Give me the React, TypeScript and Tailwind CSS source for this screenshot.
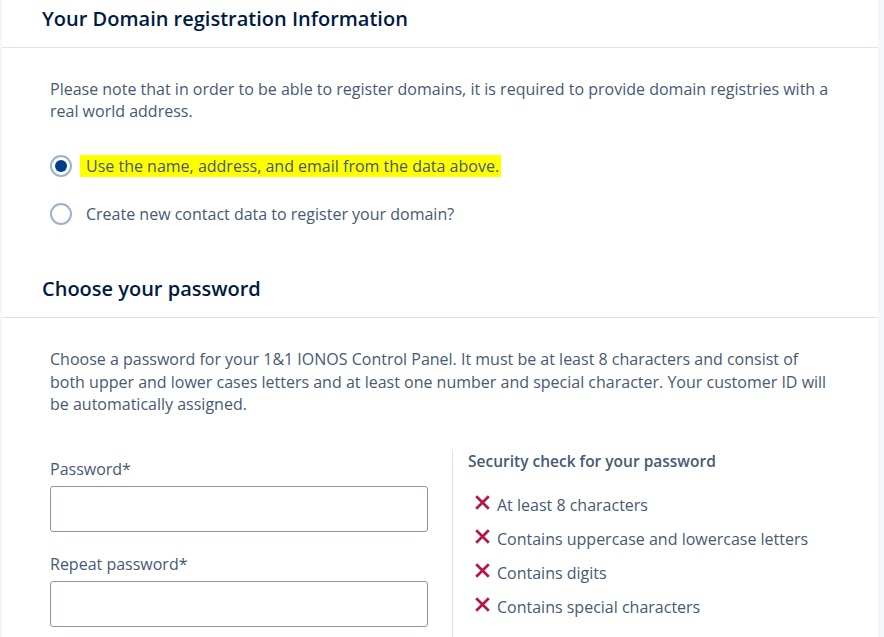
import React from "react";

function XIcon() {
  return (
    <svg width="15" height="15" viewBox="0 0 15 15" className="shrink-0 mt-[1px]">
      <path d="M1.2 1.2 L13.8 13.8 M13.8 1.2 L1.2 13.8" stroke="#b5164a" strokeWidth="2.7" strokeLinecap="butt" fill="none" />
    </svg>
  );
}

function Radio({ checked }: { checked: boolean }) {
  return (
    <span className="flex h-[22px] w-[22px] shrink-0 items-center justify-center rounded-full border-2 border-[#9ab3cf] bg-white">
      {checked && <span className="h-[12px] w-[12px] rounded-full bg-[#003d8f]" />}
    </span>
  );
}

export default function App() {
  const checks = [
    "At least 8 characters",
    "Contains uppercase and lowercase letters",
    "Contains digits",
    "Contains special characters",
  ];
  return (
    <div
      className="flex h-[637px] w-[884px] overflow-hidden bg-[#f4f6f8] text-[#465a75]"
      style={{ fontFamily: '"Open Sans", "Noto Sans", sans-serif' }}
    >
      <div className="ml-[2px] w-[876px] bg-white">
        {/* Section 1 */}
        <div className="border-b border-[#dbe2ea] pl-[40px] pt-[5px] pb-[14px]">
          <h2 className="text-[20px] font-semibold leading-[28px] text-[#001b41]">
            Your Domain registration Information
          </h2>
        </div>
        <div className="px-[48px]">
          <p className="mt-[30px] text-[16px] leading-[22px]">
            Please note that in order to be able to register domains, it is required to provide domain registries with a real world address.
          </p>
          <div className="mt-[33px] flex items-center">
            <Radio checked />
            <span className="ml-[8px] bg-[#ffff00] pl-[6px] pr-[2px] text-[16px] leading-[22px]">
              Use the name, address, and email from the data above.
            </span>
          </div>
          <div className="mt-[26px] flex items-center">
            <Radio checked={false} />
            <span className="ml-[14px] text-[16px] leading-[22px]">
              Create new contact data to register your domain?
            </span>
          </div>
        </div>

        {/* Section 2 */}
        <div className="mt-[50px] border-b border-[#dbe2ea] pl-[40px] pb-[14px]">
          <h2 className="text-[20px] font-semibold leading-[28px] text-[#001b41]">
            Choose your password
          </h2>
        </div>
        <div className="px-[48px]">
          <p className="mt-[30px] text-[16px] leading-[22.5px]">
            Choose a password for your 1&amp;1 IONOS Control Panel. It must be at least 8 characters and consist of both upper and lower cases letters and at least one number and special character. Your customer ID will be automatically assigned.
          </p>
          <div className="mt-[34px] flex">
            <div className="w-[402px] shrink-0 pt-[7px]">
              <label className="block text-[16px] leading-[24px]">Password*</label>
              <div className="mt-[5px] h-[46px] w-[378px] rounded-[3px] border border-[#8797ab] bg-white" />
              <label className="mt-[20px] block text-[16px] leading-[24px]">Repeat password*</label>
              <div className="mt-[5px] h-[46px] w-[378px] rounded-[3px] border border-[#8797ab] bg-white" />
            </div>
            <div className="flex-1 border-l border-[#dbe3ec] pl-[15px] pb-[20px]">
              <h3 className="text-[15.5px] font-semibold leading-[22px]">Security check for your password</h3>
              <ul className="mt-[22px] flex flex-col gap-[12px] pl-[7px]">
                {checks.map((c) => (
                  <li key={c} className="flex items-start gap-[7px] text-[16px] leading-[22px]">
                    <XIcon />
                    <span>{c}</span>
                  </li>
                ))}
              </ul>
            </div>
          </div>
        </div>
      </div>
    </div>
  );
}
